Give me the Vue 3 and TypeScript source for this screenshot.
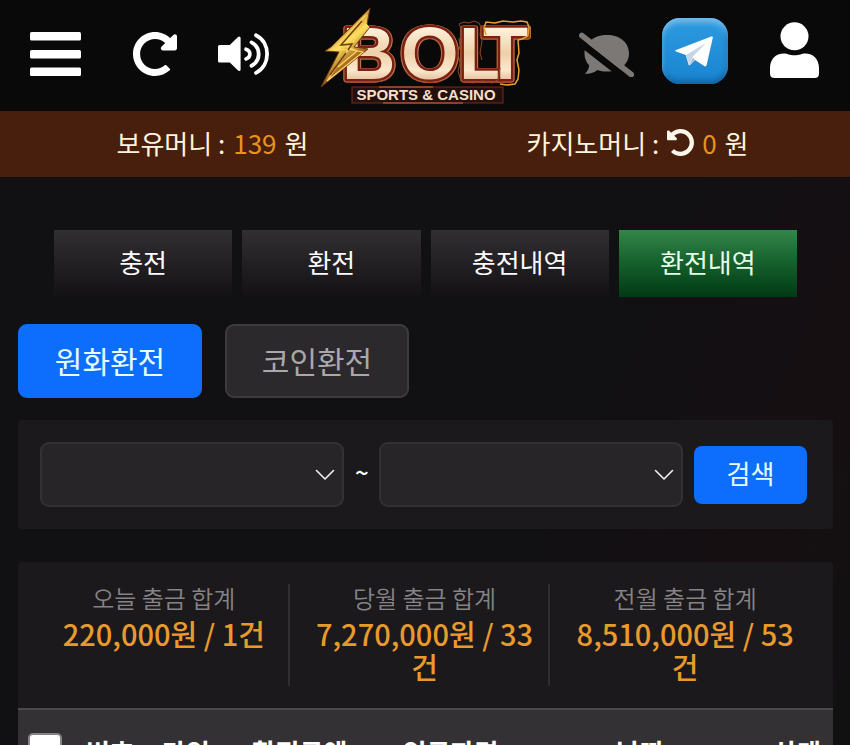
<script setup lang="ts">
import { ref } from 'vue'

interface Summary {
  label: string
  value: string
}

const menuTabs: string[] = ['충전', '환전', '충전내역', '환전내역']
const activeTab = ref('환전내역')

const kinds: string[] = ['원화환전', '코인환전']
const activeKind = ref('원화환전')

const startDate = ref('')
const endDate = ref('')

const summaries: Summary[] = [
  { label: '오늘 출금 합계', value: '220,000원 / 1건' },
  { label: '당월 출금 합계', value: '7,270,000원 / 33건' },
  { label: '전월 출금 합계', value: '8,510,000원 / 53건' },
]

const columns: string[] = ['번호', '타입', '환전금액', '입금자명', '날짜', '상태']
</script>

<template>
  <div class="page">
    <header class="topbar">
      <div class="group group-left">
        <button class="icon-btn menu-btn" type="button" aria-label="메뉴">
          <svg width="51" height="44" viewBox="0 0 51 44" fill="#fff">
            <rect x="0" y="0" width="51" height="8.5" rx="1.5" />
            <rect x="0" y="18" width="51" height="8.5" rx="1.5" />
            <rect x="0" y="35.5" width="51" height="8.5" rx="1.5" />
          </svg>
        </button>
        <button class="icon-btn" type="button" aria-label="새로고침">
          <svg width="44" height="44" viewBox="8 8 496 496" fill="#fff">
            <path d="M256.455 8c66.269.119 126.437 26.233 170.859 68.685l35.715-35.715C478.149 25.851 504 36.559 504 57.941V192c0 13.255-10.745 24-24 24H345.941c-21.382 0-32.09-25.851-16.971-40.971l41.75-41.75c-30.864-28.899-70.801-44.907-113.23-45.273-92.398-.798-170.283 73.977-169.484 169.442C88.764 348.009 162.184 424 256 424c41.127 0 79.997-14.678 110.629-41.556 4.743-4.161 11.906-3.908 16.368.553l39.662 39.662c4.872 4.872 4.631 12.815-.482 17.433C378.202 479.813 319.926 504 256 504 119.034 504 8.001 392.967 8 256.002 7.999 119.193 119.646 7.755 256.455 8z" />
          </svg>
        </button>
        <button class="icon-btn" type="button" aria-label="소리">
          <svg width="51" height="44" viewBox="218 33 51 44" fill="none" stroke="#fff" stroke-linecap="round" stroke-linejoin="round">
            <path d="M219.5 47.5h10.8l8.8-8.5v31.500l-8.800-8.500h-10.800z" fill="#fff" stroke-width="3" />
            <path d="M246 50.200c5.200 1.600 5.200 8.200 0 9.800" stroke-width="3.600" />
            <path d="M251.500 43.400c9.600 4.800 9.600 18.600 0 23.400" stroke-width="3.800" />
            <path d="M256 36.300c14.800 7.400 14.800 30.200 0 37.600" stroke-width="3.800" />
          </svg>
        </button>
      </div>

      <a class="logo" href="#" aria-label="BOLT SPORTS &amp; CASINO">
        <svg width="214" height="104" viewBox="318 4 214 104">
          <defs>
            <linearGradient id="ivory" x1="0" y1="0" x2="0" y2="1">
              <stop offset="0.15" stop-color="#fff6e0" />
              <stop offset="0.5" stop-color="#eed0aa" />
              <stop offset="0.7" stop-color="#fbe8cd" />
              <stop offset="0.85" stop-color="#dfb893" />
            </linearGradient>
            <linearGradient id="gold" x1="0" y1="0" x2="0.5" y2="1">
              <stop offset="0" stop-color="#ffe08a" />
              <stop offset="0.35" stop-color="#b46f1c" />
              <stop offset="0.55" stop-color="#ffe45c" />
              <stop offset="0.8" stop-color="#9a5a18" />
              <stop offset="1" stop-color="#f5c25c" />
            </linearGradient>
          </defs>
          <text class="logo-word" x="343 402 460 484" y="79" fill="url(#ivory)" stroke="#7a2113" stroke-width="5" stroke-linejoin="round">BOLT</text>
          <path d="M462 28l-2-4 5-2 5 1 5-2 5 2 2 4-1 8 2 6-2 12 2 7M460 38l1 8-2 7 2 10-2 8 3 10 12 2 10-2 9 2 6-3 2-12" fill="none" stroke="#8a4a22" stroke-width="1" />
          <path d="M487 35l-2-7 2-6 9 1 8-2 10 1 8-1 6 1 2 5-1 9-6 3-4 1 1 13-2 7 2 10-1 9-3 5-8 1-7-1" fill="none" stroke="#e9a032" stroke-width="1.500" />
          <path d="M371 8L332 47l-6 4 14 1-18 35 47-38-14-2 16-20-3-3z" fill="url(#gold)" stroke="#6b3a10" stroke-width="1" />
          <path d="M367 15L334 49l15 1-21 31 36-29-15-3 16-22-12 9-5 11 10 4-19 16" fill="none" stroke="#ffd568" stroke-width="1.200" />
          <path d="M363 21l-21 24 11-1-4 6M347 53l-16 22" fill="none" stroke="#704011" stroke-width="1.500" />
          <rect x="353" y="87" width="151" height="16" fill="#24100d" stroke="#7a2b1e" stroke-width="1" />
          <path d="M380 87h54M384 103h80" stroke="#d3683c" stroke-width="1" />
          <text class="logo-sub" x="427" y="100" text-anchor="middle" fill="#f7dfc8">SPORTS &amp; CASINO</text>
        </svg>
      </a>

      <div class="group group-right">
        <button class="icon-btn" type="button" aria-label="채팅 끄기">
          <svg width="56" height="52" viewBox="579 25 56 52">
            <path d="M607 35c13 0 22 7.500 22 18.500 0 10.500-9 18-22 18-3.500 0-6.600-.5-9.400-1.500-3.600 2.600-7.600 4-12.600 4 2.300-2.400 3.900-5.400 4.200-8.400-3-3.300-4.700-7.300-4.700-12.100C584.500 42.500 594 35 607 35z" fill="#7b7876" />
            <path d="M578 40.500l51 40" stroke="#090909" stroke-width="7" />
            <path d="M581.800 35.500l49.500 39" stroke="#7b7876" stroke-width="5.500" stroke-linecap="round" />
          </svg>
        </button>
        <a class="telegram" href="#" aria-label="텔레그램">
          <svg width="66" height="66" viewBox="662 18 66 66">
            <path d="M676 50l35.300-13.500c1-.3 1.800.2 1.500 1.300l-6.200 27.500c-.3 1-1.200 1.400-2 .9L695 60l-5 5c-.7.600-1.300.4-1.500-.6L685.800 55l-9.700-3.400c-1-.4-1-1.200-.1-1.600z" fill="#fff" />
            <path d="M686 55l20-12-13.500 14-3.200 8z" fill="#c5d6e6" />
            <path d="M693 57.500l-3.500 7.500 5.300-5z" fill="#9db9d2" />
          </svg>
        </a>
        <button class="icon-btn" type="button" aria-label="내 정보">
          <svg width="49" height="58" viewBox="770 22 49 58" fill="#fff">
            <circle cx="794.500" cy="36.300" r="14" />
            <path d="M784 53.500c3 0 5.500 1.800 10.500 1.800s7.500-1.800 10.500-1.800c8.500 0 14 6 14 14.500v5.500c0 3-1.500 4.500-4.500 4.500h-40c-3 0-4.500-1.500-4.500-4.500V68c0-8.500 5.500-14.500 14-14.500z" />
          </svg>
        </button>
      </div>
    </header>

    <section class="balances">
      <p class="balance">보유머니 : <span class="amount">139</span> 원</p>
      <p class="balance">
        카지노머니 :
        <button class="undo" type="button" aria-label="카지노머니 회수">
          <svg width="27" height="27" viewBox="8 8 496 496" fill="#fff8ea">
            <path transform="matrix(-1 0 0 1 512 0)" d="M256.455 8c66.269.119 126.437 26.233 170.859 68.685l35.715-35.715C478.149 25.851 504 36.559 504 57.941V192c0 13.255-10.745 24-24 24H345.941c-21.382 0-32.09-25.851-16.971-40.971l41.75-41.75c-30.864-28.899-70.801-44.907-113.23-45.273-92.398-.798-170.283 73.977-169.484 169.442C88.764 348.009 162.184 424 256 424c41.127 0 79.997-14.678 110.629-41.556 4.743-4.161 11.906-3.908 16.368.553l39.662 39.662c4.872 4.872 4.631 12.815-.482 17.433C378.202 479.813 319.926 504 256 504 119.034 504 8.001 392.967 8 256.002 7.999 119.193 119.646 7.755 256.455 8z" />
          </svg>
        </button>
        <span class="amount">0</span> 원
      </p>
    </section>

    <main class="content">
      <nav class="tabs">
        <button
          v-for="tab in menuTabs"
          :key="tab"
          type="button"
          class="tab"
          :class="{ active: tab === activeTab }"
          @click="activeTab = tab"
        >{{ tab }}</button>
      </nav>

      <div class="kinds">
        <button
          v-for="kind in kinds"
          :key="kind"
          type="button"
          class="kind"
          :class="{ active: kind === activeKind }"
          @click="activeKind = kind"
        >{{ kind }}</button>
      </div>

      <form class="search" @submit.prevent>
        <div class="picker">
          <select v-model="startDate" aria-label="시작일"><option value=""></option></select>
          <svg class="chevron" width="20" height="12" viewBox="0 0 20 12" fill="none" stroke="#f2f0f2" stroke-width="1.600" stroke-linecap="round" stroke-linejoin="round"><path d="M1.500 1.500l8.500 8.500 8.500-8.500" /></svg>
        </div>
        <span class="tilde">~</span>
        <div class="picker">
          <select v-model="endDate" aria-label="종료일"><option value=""></option></select>
          <svg class="chevron" width="20" height="12" viewBox="0 0 20 12" fill="none" stroke="#f2f0f2" stroke-width="1.600" stroke-linecap="round" stroke-linejoin="round"><path d="M1.500 1.500l8.500 8.500 8.500-8.500" /></svg>
        </div>
        <button class="submit" type="submit">검색</button>
      </form>

      <section class="panel">
        <dl class="stats">
          <div v-for="item in summaries" :key="item.label" class="stat">
            <dt>{{ item.label }}</dt>
            <dd>{{ item.value }}</dd>
          </div>
        </dl>
        <div class="table-wrap">
          <table>
            <colgroup>
              <col class="w-check" />
              <col class="w-short" />
              <col class="w-short" />
              <col class="w-mid" />
              <col class="w-mid" />
              <col class="w-date" />
              <col class="w-state" />
            </colgroup>
            <thead>
              <tr>
                <th><input type="checkbox" aria-label="전체 선택" /></th>
                <th v-for="column in columns" :key="column">{{ column }}</th>
              </tr>
            </thead>
          </table>
        </div>
      </section>
    </main>
  </div>
</template>

<style>
body {
  background: #111013;
  overflow: hidden;
}
</style>

<style scoped>
.page {
  height: 100vh;
  overflow: hidden;
  background: linear-gradient(115deg, #111013 65%, #160f12 85%, #111112 100%);
  color: #fff;
  font-family: "Noto Sans CJK KR", "Noto Sans", sans-serif;
  font-weight: 400;
}

button {
  margin: 0;
  padding: 0;
  border: 0;
  background: none;
  color: inherit;
  font: inherit;
  cursor: pointer;
}

svg {
  display: block;
}

.topbar {
  display: flex;
  align-items: center;
  justify-content: space-between;
  height: 111px;
  padding: 0 31px 0 30px;
  box-sizing: border-box;
  background: #090909;
}

.group {
  display: flex;
  align-items: center;
}

.group-left {
  gap: 41px;
  padding-bottom: 3px;
}

.menu-btn {
  padding-right: 11px;
}

.group-right {
  gap: 27px;
  padding-bottom: 9px;
}

.telegram {
  margin-right: 15px;
  border-radius: 18px;
  background: linear-gradient(#2c9ae0, #1a84d0);
  box-shadow: inset 0 6px 6px -2px #7cc1ee, inset 0 -5px 6px -2px #0f5f9c, inset 3px 0 4px -2px #4ba8e2, inset -3px 0 4px -2px #1669a8;
}

.logo-word {
  font: 700 74px "Liberation Sans", Arial, sans-serif;
  paint-order: stroke;
  filter: drop-shadow(1px 0 0 #c47a4c) drop-shadow(-1px 0 0 #b96f44) drop-shadow(0 1px 0 #a4502d);
}

.logo-sub {
  font: 700 15px "Liberation Sans", Arial, sans-serif;
}

.balances {
  display: grid;
  grid-template-columns: 1fr 1fr;
  height: 66px;
  background: #481f0d;
}

.balance {
  display: flex;
  align-items: center;
  justify-content: center;
  gap: 8px;
  margin: 0;
  padding-bottom: 3px;
  color: #fff3df;
  font-size: 26px;
  line-height: 32px;
}

.amount {
  color: #e8921e;
}

.content {
  padding: 53px 17px 0 18px;
}

.tabs {
  display: grid;
  grid-template-columns: repeat(4, 1fr);
  gap: 10px;
  padding: 0 36px;
}

.tab {
  height: 67px;
  padding-bottom: 3px;
  background: linear-gradient(#322f33, #131114);
  color: #fdfafd;
  font-size: 26px;
  line-height: 32px;
}

.tab.active {
  background: linear-gradient(#35864a, #17632e 45%, #003a14);
  color: #e6ffe9;
}

.kinds {
  display: flex;
  gap: 23px;
  margin-top: 27px;
}

.kind {
  width: 184px;
  height: 74px;
  padding-bottom: 3px;
  box-sizing: border-box;
  border: 2px solid #3d3b3e;
  border-radius: 9px;
  background: #2b292c;
  color: #aaa8aa;
  font-size: 30px;
  line-height: 36px;
}

.kind.active {
  border-color: #0d6efd;
  background: #0d6efd;
  color: #e6ffff;
}

.search {
  display: flex;
  align-items: center;
  gap: 11px;
  margin-top: 22px;
  padding: 22px 26px 22px 22px;
  border-radius: 4px;
  background: #1b191b;
}

.picker {
  position: relative;
  flex: 1;
}

.picker select {
  display: block;
  width: 100%;
  height: 65px;
  padding: 0 40px 0 16px;
  border: 2px solid #333134;
  border-radius: 9px;
  background: #272528;
  color: #fff;
  font: inherit;
  font-size: 24px;
  appearance: none;
}

.chevron {
  position: absolute;
  top: 27px;
  right: 9px;
  pointer-events: none;
}

.tilde {
  width: 13px;
  padding-bottom: 6px;
  font-size: 24px;
  font-weight: 500;
  line-height: 32px;
  text-align: center;
}

.submit {
  width: 113px;
  height: 58px;
  padding-bottom: 3px;
  border-radius: 8px;
  background: #0d6efd;
  color: #e6ffff;
  font-size: 26px;
  line-height: 32px;
}

.panel {
  margin-top: 33px;
  border-radius: 4px;
  background: #1b191b;
}

.stats {
  display: grid;
  grid-template-columns: repeat(3, 1fr);
  gap: 11px;
  margin: 0;
  padding: 22px;
}

.stat {
  padding: 0 10px 3px;
  border-right: 2px solid #302e31;
  text-align: center;
}

.stat:last-child {
  border-color: transparent;
}

.stat dt {
  padding-bottom: 6px;
  color: #858386;
  font-size: 24px;
  font-weight: 350;
  line-height: 27px;
}

.stat dd {
  margin: 0;
  color: #e99a2c;
  font-size: 29px;
  font-weight: 500;
  line-height: 33px;
}

.table-wrap {
  overflow: hidden;
}

table {
  width: 100%;
  min-width: 822px;
  border-collapse: collapse;
  table-layout: fixed;
  background: #343134;
}

.w-check {
  width: 54px;
}

.w-short {
  width: 76px;
}

.w-mid {
  width: 151px;
}

.w-date {
  width: 228px;
}

.w-state {
  width: 86px;
}

th {
  height: 84px;
  padding: 0;
  border-top: 2px solid #4b494b;
  font-size: 26px;
  font-weight: 700;
  line-height: 32px;
  text-align: center;
}

th input {
  display: block;
  width: 34px;
  height: 34px;
  margin: 0 auto 4px;
  box-sizing: border-box;
  border: 2px solid #858385;
  border-radius: 5px;
  background: #fff;
  appearance: none;
}
</style>
